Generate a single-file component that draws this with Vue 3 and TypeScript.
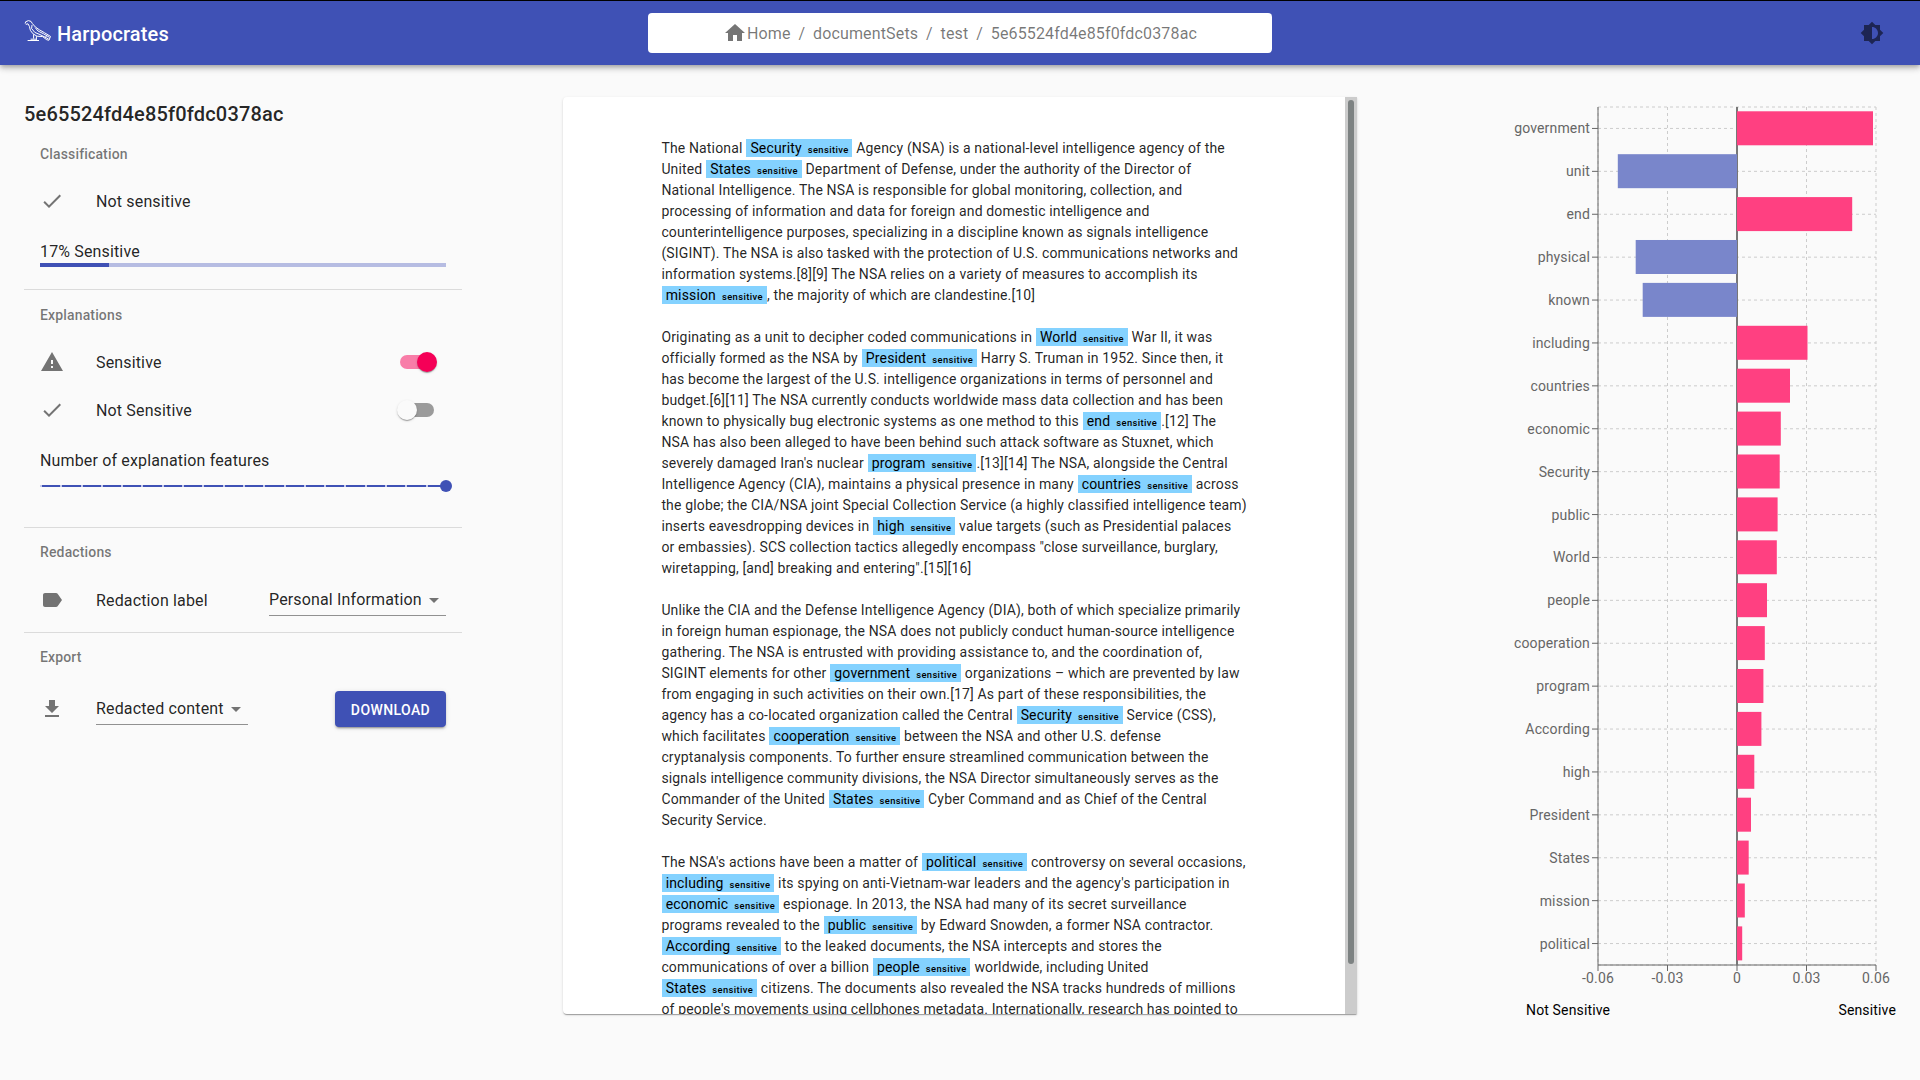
<script setup lang="ts">
interface Feature {
  word: string
  width: number
}

const crumbs: string[] = ['documentSets', 'test', '5e65524fd4e85f0fdc0378ac']

// Words wrapped in braces are highlighted as sensitive.
const paragraphs: string[][] = [
  [
    'The National {Security} Agency (NSA) is a national-level intelligence agency of the',
    'United {States} Department of Defense, under the authority of the Director of',
    'National Intelligence. The NSA is responsible for global monitoring, collection, and',
    'processing of information and data for foreign and domestic intelligence and',
    'counterintelligence purposes, specializing in a discipline known as signals intelligence',
    '(SIGINT). The NSA is also tasked with the protection of U.S. communications networks and',
    'information systems.[8][9] The NSA relies on a variety of measures to accomplish its',
    '{mission}, the majority of which are clandestine.[10]',
  ],
  [
    'Originating as a unit to decipher coded communications in {World} War II, it was',
    'officially formed as the NSA by {President} Harry S. Truman in 1952. Since then, it',
    'has become the largest of the U.S. intelligence organizations in terms of personnel and',
    'budget.[6][11] The NSA currently conducts worldwide mass data collection and has been',
    'known to physically bug electronic systems as one method to this {end}.[12] The',
    'NSA has also been alleged to have been behind such attack software as Stuxnet, which',
    "severely damaged Iran's nuclear {program}.[13][14] The NSA, alongside the Central",
    'Intelligence Agency (CIA), maintains a physical presence in many {countries} across',
    'the globe; the CIA/NSA joint Special Collection Service (a highly classified intelligence team)',
    'inserts eavesdropping devices in {high} value targets (such as Presidential palaces',
    'or embassies). SCS collection tactics allegedly encompass "close surveillance, burglary,',
    'wiretapping, [and] breaking and entering".[15][16]',
  ],
  [
    'Unlike the CIA and the Defense Intelligence Agency (DIA), both of which specialize primarily',
    'in foreign human espionage, the NSA does not publicly conduct human-source intelligence',
    'gathering. The NSA is entrusted with providing assistance to, and the coordination of,',
    'SIGINT elements for other {government} organizations – which are prevented by law',
    'from engaging in such activities on their own.[17] As part of these responsibilities, the',
    'agency has a co-located organization called the Central {Security} Service (CSS),',
    'which facilitates {cooperation} between the NSA and other U.S. defense',
    'cryptanalysis components. To further ensure streamlined communication between the',
    'signals intelligence community divisions, the NSA Director simultaneously serves as the',
    'Commander of the United {States} Cyber Command and as Chief of the Central',
    'Security Service.',
  ],
  [
    "The NSA's actions have been a matter of {political} controversy on several occasions,",
    "{including} its spying on anti-Vietnam-war leaders and the agency's participation in",
    '{economic} espionage. In 2013, the NSA had many of its secret surveillance',
    'programs revealed to the {public} by Edward Snowden, a former NSA contractor.',
    '{According} to the leaked documents, the NSA intercepts and stores the',
    'communications of over a billion {people} worldwide, including United',
    '{States} citizens. The documents also revealed the NSA tracks hundreds of millions',
    "of people's movements using cellphones metadata. Internationally, research has pointed to",
  ],
]

const parts = (line: string): string[] => line.split(/(\{\w+\})/).filter((s) => s !== '')
const isMark = (s: string): boolean => s.startsWith('{')
const bare = (s: string): string => s.slice(1, -1)

const features: Feature[] = [
  { word: 'government', width: 136 },
  { word: 'unit', width: -119.2 },
  { word: 'end', width: 115.2 },
  { word: 'physical', width: -101.3 },
  { word: 'known', width: -94.3 },
  { word: 'including', width: 70.5 },
  { word: 'countries', width: 53 },
  { word: 'economic', width: 43.8 },
  { word: 'Security', width: 42.7 },
  { word: 'public', width: 40.6 },
  { word: 'World', width: 39.8 },
  { word: 'people', width: 30 },
  { word: 'cooperation', width: 27.8 },
  { word: 'program', width: 26.4 },
  { word: 'According', width: 24.4 },
  { word: 'high', width: 17.3 },
  { word: 'President', width: 14 },
  { word: 'States', width: 11.7 },
  { word: 'mission', width: 7.8 },
  { word: 'political', width: 5.2 },
]
const ticks: string[] = ['-0.06', '-0.03', '0', '0.03', '0.06']

// Plot geometry inside the chart's own coordinate system.
const left = 98
const top = 10
const band = 42.9
const plotWidth = 278
const plotHeight = band * features.length
const zero = left + plotWidth / 2
const rowY = (i: number): number => top + band * (i + 0.5)
const tickX = (i: number): number => left + (plotWidth / 4) * i
</script>

<template>
  <div class="page">
    <header class="bar">
      <div class="brand">
        <svg class="bird" width="28" height="24" viewBox="0 0 28 24">
          <path d="M1.2 5.6L1.6 3.8L4.4 2.6L7 3.4L8.4 5.6L11.4 9L15.4 11.8L20.6 14.8L26.5 18.4L25 22.2L22.8 21.8L18.6 18.6L13 18.2L9 15.8L6.4 12.4L5.4 8.4L4 5.8L1.8 6.4" />
          <path d="M8 7L7.6 10.5L10.8 14.4L16 16.6L24.6 21M11.2 9.6L14 13L19.5 15.8L25.6 19.4M21.4 19.4L23.2 16.8" />
          <path d="M9.6 16.4V20.6M12.4 18.2V21.6M3.6 22.5H15M6.6 21.2H13" />
        </svg>
        <span class="brand-name">Harpocrates</span>
      </div>
      <nav class="crumbs">
        <svg class="home" width="24" height="24" viewBox="0 0 24 24"><path d="M10 20v-6h4v6h5v-8h3L12 3 2 12h3v8z" /></svg>
        <span>Home</span>
        <template v-for="c in crumbs" :key="c">
          <span class="slash">/</span>
          <span>{{ c }}</span>
        </template>
      </nav>
      <div class="theme">
        <svg width="24" height="24" viewBox="0 0 24 24"><path d="M20 15.31L23.31 12 20 8.69V4h-4.69L12 .69 8.69 4H4v4.69L.69 12 4 15.31V20h4.69L12 23.31 15.31 20H20v-4.69zM12 18V6c3.31 0 6 2.69 6 6s-2.69 6-6 6z" /></svg>
      </div>
    </header>

    <main class="body">
      <aside class="side">
        <h1 class="title">5e65524fd4e85f0fdc0378ac</h1>
        <section class="group classification">
          <h2>Classification</h2>
          <div class="item">
            <svg class="icon" viewBox="0 0 24 24"><path d="M9 16.17L4.83 12l-1.42 1.41L9 19 21 7l-1.41-1.41z" /></svg>
            <span>Not sensitive</span>
          </div>
          <div class="score">17% Sensitive</div>
          <div class="progress"><div class="progress-fill"></div></div>
        </section>
        <section class="group explanations">
          <h2>Explanations</h2>
          <div class="item">
            <svg class="icon" viewBox="0 0 24 24"><path d="M1 21h22L12 2 1 21zm12-3h-2v-2h2v2zm0-4h-2v-4h2v4z" /></svg>
            <span>Sensitive</span>
            <div class="switch on"><i class="knob"></i></div>
          </div>
          <div class="item">
            <svg class="icon" viewBox="0 0 24 24"><path d="M9 16.17L4.83 12l-1.42 1.41L9 19 21 7l-1.41-1.41z" /></svg>
            <span>Not Sensitive</span>
            <div class="switch"><i class="knob"></i></div>
          </div>
          <div class="slider-label">Number of explanation features</div>
          <div class="slider">
            <i v-for="n in 20" :key="n" class="stop"></i>
            <i class="handle"></i>
          </div>
        </section>
        <section class="group redactions">
          <h2>Redactions</h2>
          <div class="item">
            <svg class="icon" viewBox="0 0 24 24"><path d="M17.63 5.84C17.27 5.33 16.67 5 16 5L5 5.01C3.9 5.01 3 5.9 3 7v10c0 1.1.9 1.99 2 1.99L16 19c.67 0 1.27-.33 1.63-.84L22 12l-4.37-6.16z" /></svg>
            <span>Redaction label</span>
            <div class="select push">
              <span>Personal Information</span>
              <svg viewBox="0 0 24 24"><path d="M7 10l5 5 5-5z" /></svg>
            </div>
          </div>
        </section>
        <section class="group export">
          <h2>Export</h2>
          <div class="item">
            <svg class="icon" viewBox="0 0 24 24"><path d="M19 9h-4V3H9v6H5l7 7 7-7zM5 18v2h14v-2H5z" /></svg>
            <div class="select content">
              <span>Redacted content</span>
              <svg viewBox="0 0 24 24"><path d="M7 10l5 5 5-5z" /></svg>
            </div>
            <button class="download">Download</button>
          </div>
        </section>
      </aside>

      <article class="paper">
        <div class="text">
          <p v-for="(lines, p) in paragraphs" :key="p">
            <span v-for="(line, l) in lines" :key="l" class="line"><template v-for="(s, k) in parts(line)" :key="k"><mark v-if="isMark(s)">{{ bare(s) }}<b>sensitive</b></mark><template v-else>{{ s }}</template></template></span>
          </p>
        </div>
        <div class="scroll"><div class="scroll-thumb"></div></div>
      </article>

      <section class="chart">
        <svg width="420" height="900" viewBox="0 0 420 900">
          <g class="grid">
            <line v-for="(f, i) in features" :key="f.word" :x1="left" :x2="left + plotWidth" :y1="rowY(i)" :y2="rowY(i)" />
            <line :x1="left" :x2="left + plotWidth" :y1="top" :y2="top" />
            <line :x1="left" :x2="left + plotWidth" :y1="top + plotHeight" :y2="top + plotHeight" />
            <line v-for="(t, i) in ticks" :key="t" :x1="tickX(i)" :x2="tickX(i)" :y1="top" :y2="top + plotHeight" />
          </g>
          <g class="axis">
            <line :x1="left" :x2="left" :y1="top" :y2="top + plotHeight" />
            <line :x1="left" :x2="left + plotWidth" :y1="top + plotHeight" :y2="top + plotHeight" />
            <line v-for="(f, i) in features" :key="f.word" :x1="left - 6" :x2="left" :y1="rowY(i)" :y2="rowY(i)" />
            <line v-for="(t, i) in ticks" :key="t" :x1="tickX(i)" :x2="tickX(i)" :y1="top + plotHeight" :y2="top + plotHeight + 6" />
          </g>
          <line class="zero" :x1="zero" :x2="zero" :y1="top" :y2="top + plotHeight" />
          <rect
            v-for="(f, i) in features"
            :key="f.word"
            :x="f.width < 0 ? zero + f.width : zero"
            :y="top + band * i + 4.29"
            :width="Math.abs(f.width)"
            height="34"
            :class="f.width < 0 ? 'neg' : 'pos'"
          />
          <g class="labels">
            <text v-for="(f, i) in features" :key="f.word" :x="left - 8" :y="rowY(i) + 5" text-anchor="end">{{ f.word }}</text>
            <text v-for="(t, i) in ticks" :key="t" :x="tickX(i)" :y="top + plotHeight + 18" text-anchor="middle">{{ t }}</text>
          </g>
        </svg>
        <div class="legend"><span>Not Sensitive</span><span>Sensitive</span></div>
      </section>
    </main>
  </div>
</template>

<style>
body {
  margin: 0;
  background: #fafafa;
}
</style>

<style scoped>
.page {
  box-sizing: border-box;
  width: 1920px;
  height: 1080px;
  overflow: hidden;
  border-top: 1px solid #000;
  background: #fafafa;
  color: rgba(0, 0, 0, 0.87);
  font-family: Roboto, 'Liberation Sans', sans-serif;
  font-size: 16px;
  line-height: 24px;
  letter-spacing: 0.15px;
}
.bar {
  box-sizing: border-box;
  display: grid;
  grid-template-columns: 1fr 624px 1fr;
  align-items: center;
  height: 64px;
  padding: 0 24px;
  background: #3f51b5;
  box-shadow: 0 2px 4px -1px rgba(0, 0, 0, 0.2), 0 4px 5px 0 rgba(0, 0, 0, 0.14), 0 1px 10px 0 rgba(0, 0, 0, 0.12);
}
.brand {
  display: flex;
  align-items: center;
  color: #fff;
}
.bird {
  margin: -6px 5px 0 0;
  fill: none;
  stroke: #fff;
  stroke-width: 1;
}
.brand-name {
  padding-top: 2px;
  font-size: 20px;
  font-weight: 500;
  line-height: 32px;
}
.crumbs {
  display: flex;
  align-items: center;
  justify-content: center;
  height: 40px;
  border-radius: 4px;
  background: #fff;
  color: rgba(0, 0, 0, 0.54);
}
.crumbs span {
  padding-top: 2px;
}
.home {
  fill: currentColor;
}
.slash {
  margin: 0 7.8px;
}
.theme {
  display: flex;
  justify-content: flex-end;
  padding-right: 12px;
  fill: rgba(0, 0, 0, 0.54);
}
.body {
  display: flex;
  align-items: flex-start;
  padding-left: 24px;
}
.side {
  width: 438px;
  margin-top: 33px;
}
.title {
  margin: 0;
  font-size: 20px;
  font-weight: 500;
  line-height: 32px;
  letter-spacing: 0.17px;
}
.group {
  box-sizing: border-box;
  padding: 0 16px;
  border-bottom: 1px solid rgba(0, 0, 0, 0.12);
}
.group h2 {
  margin: 0;
  color: rgba(0, 0, 0, 0.54);
  font-size: 14px;
  font-weight: 500;
  line-height: 48px;
}
.classification h2,
.explanations h2 {
  margin-bottom: -1px;
}
.classification {
  height: 160px;
}
.explanations {
  height: 238px;
  padding-top: 1px;
}
.redactions {
  height: 105px;
}
.export {
  border-bottom: 0;
}
.export .item {
  height: 56px;
}
.item {
  display: flex;
  align-items: center;
  height: 48px;
}
.item > span {
  padding-top: 2px;
}
.icon {
  flex: none;
  width: 24px;
  height: 24px;
  margin-right: 32px;
  fill: rgba(0, 0, 0, 0.54);
}
.score {
  padding-top: 15px;
}
.progress {
  height: 4px;
  margin-top: -1px;
  background: #b6bce2;
}
.progress-fill {
  width: 17%;
  height: 4px;
  background: #3f51b5;
}
.switch {
  position: relative;
  width: 34px;
  height: 14px;
  margin: 0 12px 0 auto;
  border-radius: 7px;
  background: #9b9b9b;
}
.knob {
  position: absolute;
  top: -3px;
  left: -3px;
  width: 20px;
  height: 20px;
  border-radius: 50%;
  background: #fafafa;
  box-shadow: 0 2px 1px -1px rgba(0, 0, 0, 0.2), 0 1px 1px 0 rgba(0, 0, 0, 0.14), 0 1px 3px 0 rgba(0, 0, 0, 0.12);
}
.switch.on {
  background: #f87da8;
}
.switch.on .knob {
  left: 17px;
  background: #f50057;
}
.slider-label {
  padding-top: 15px;
}
.slider {
  position: relative;
  display: flex;
  height: 2px;
  margin-top: 12px;
  background: #3f51b5;
}
.stop {
  flex: 1;
  box-sizing: border-box;
  border-left: 2px solid #c5caec;
}
.handle {
  position: absolute;
  top: -5px;
  right: -6px;
  width: 12px;
  height: 12px;
  border-radius: 50%;
  background: #3f51b5;
}
.select {
  box-sizing: border-box;
  display: flex;
  align-items: center;
  justify-content: space-between;
  height: 32px;
  border-bottom: 1px solid rgba(0, 0, 0, 0.42);
}
.select svg {
  width: 24px;
  height: 24px;
  fill: rgba(0, 0, 0, 0.54);
}
.push {
  width: 177px;
  margin-left: auto;
}
.content {
  width: 152px;
}
.download {
  width: 111px;
  height: 36px;
  margin-left: auto;
  padding: 2px 0 0;
  border: 0;
  border-radius: 4px;
  background: #3f51b5;
  box-shadow: 0 3px 1px -2px rgba(0, 0, 0, 0.2), 0 2px 2px 0 rgba(0, 0, 0, 0.14), 0 1px 5px 0 rgba(0, 0, 0, 0.12);
  color: #fff;
  font: 500 14px/24px Roboto, sans-serif;
  letter-spacing: 0.4px;
  text-transform: uppercase;
}
.paper {
  box-sizing: border-box;
  display: flex;
  justify-content: space-between;
  width: 794px;
  height: 917px;
  margin: 32px 0 0 101px;
  overflow: hidden;
  border-radius: 4px 0 0 4px;
  background: #fff;
  box-shadow: 0 2px 1px -1px rgba(0, 0, 0, 0.2), 0 1px 1px 0 rgba(0, 0, 0, 0.14), 0 1px 3px 0 rgba(0, 0, 0, 0.12);
}
.text {
  padding: 41px 0 0 98.4px;
  font-size: 14px;
  line-height: 21px;
  letter-spacing: 0.15px;
}
.text p {
  margin: 0 0 21px;
}
.line {
  display: block;
  height: 21px;
  white-space: pre;
}
mark {
  margin: 0 0.3px;
  padding: 1px 3.8px 1px 4px;
  background: #84d2ff;
  color: #000;
}
mark b {
  margin-left: 6px;
  font-size: 9.38px;
  font-weight: 500;
  line-height: 1;
  letter-spacing: 0.38px;
}
.scroll {
  box-sizing: border-box;
  width: 12px;
  padding: 3px;
  background: #ccc;
}
.scroll-thumb {
  height: 864px;
  border-radius: 3px;
  background: #7d8282;
}
.chart {
  width: 420px;
  margin: 32px 0 0 143px;
}
.chart svg {
  display: block;
}
.grid line {
  stroke: #ccc;
  stroke-dasharray: 3 3;
}
.axis line {
  stroke: #666;
}
.zero {
  stroke: #777;
  stroke-width: 2;
}
.pos {
  fill: #ff4081;
}
.neg {
  fill: #7986cb;
}
.labels {
  fill: #666;
  font-size: 14px;
}
.legend {
  display: flex;
  justify-content: space-between;
  padding: 3px 24px 0 26px;
  color: #000;
  font-size: 14px;
  line-height: 21px;
}
</style>
